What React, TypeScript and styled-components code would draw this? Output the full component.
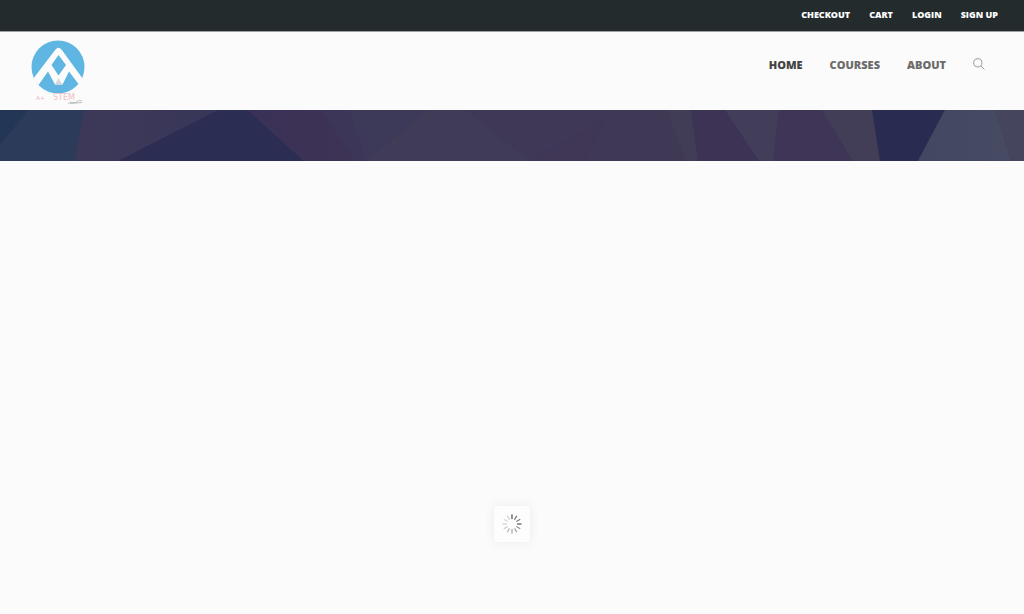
import React from 'react';
import styled, { createGlobalStyle } from 'styled-components';

const GlobalStyle = createGlobalStyle`
  *, *::before, *::after { box-sizing: border-box; }
  body {
    margin: 0;
    background: #fbfbfb;
    font-family: "Open Sans", "Liberation Sans", sans-serif;
  }
`;

const Page = styled.div`
  display: flex;
  flex-direction: column;
  min-height: 100vh;
`;

const TopBar = styled.nav`
  display: flex;
  justify-content: flex-end;
  align-items: center;
  gap: 19px;
  height: 31px;
  padding: 0 26px 1px;
  background: #232b2d;
`;

const TopLink = styled.a`
  color: #ffffff;
  font-size: 9px;
  font-weight: 800;
  line-height: 16px;
  text-decoration: none;
  text-transform: uppercase;
`;

const Header = styled.header`
  display: flex;
  justify-content: space-between;
  align-items: flex-start;
  height: 79px;
  padding: 4px 39px 0 28px;
  border-top: 1px solid #9da1a2;
`;

const LogoLink = styled.a`
  display: block;
  line-height: 0;
`;

const MainNav = styled.nav`
  display: flex;
  align-items: center;
  gap: 27px;
  padding-top: 21px;
`;

const NavLink = styled.a<{ $active?: boolean }>`
  color: ${(p) => (p.$active ? '#444444' : '#6c6c6c')};
  font-size: 11px;
  font-weight: 800;
  line-height: 16px;
  text-decoration: none;
  text-transform: uppercase;
`;

const SearchButton = styled.button`
  display: flex;
  padding: 0 0 2px;
  border: 0;
  background: none;
  color: #999999;
  cursor: pointer;
`;

const Banner = styled.section`
  height: 51px;
  background: #403a56;
  overflow: hidden;

  svg {
    display: block;
    width: 100%;
    height: 100%;
  }
`;

const Content = styled.main`
  display: flex;
  flex: 1;
  flex-direction: column;
  align-items: center;
  justify-content: flex-end;
  padding: 24px 24px 72px;
`;

const Loader = styled.div`
  display: flex;
  align-items: center;
  justify-content: center;
  width: 36px;
  height: 36px;
  border-radius: 2px;
  background: #fdfdfd;
  box-shadow: 0 0 12px rgba(0, 0, 0, 0.07);
`;

const topLinks = ['Checkout', 'Cart', 'Login', 'Sign up'];
const navLinks = ['Home', 'Courses', 'About'];
const spokes = [0.75, 0.6, 0.56, 0.62, 0.48, 0.4, 0.36, 0.3, 0.22, 0.16, 0.16, 0.2];

const Logo = () => (
  <svg width="60" height="70" viewBox="0 0 60 70" role="img" aria-label="A+ STEM">
    <circle cx="30" cy="31" r="26.5" fill="#5fb6e2" />
    <path
      d="M27.500 13.500Q30.500 10 33.500 13.500L55 43L50.500 48L41 35.500L34.500 48.500H27L20 35.500L10.500 49L5 43ZM30.500 19L23.500 29L30.500 39.500L38 29Z"
      fill="#fbfbfb"
      fillRule="evenodd"
    />
    <path d="M30.500 42L34.500 48.500H27Z" fill="#d3d9dc" />
    <text x="8" y="64" fontSize="6" fill="#eebfc4" fontFamily="DejaVu Sans, sans-serif">A+</text>
    <text x="25" y="64" fontSize="8" fill="#eebfc4" fontFamily="DejaVu Sans, sans-serif">STEM</text>
    <path d="M40 67.500q3 -2 5 -1t4 -1t5 -.5M42 67.500l12 -1" fill="none" stroke="#a9a9a9" strokeWidth=".7" />
  </svg>
);

const SearchIcon = () => (
  <svg width="12" height="12" viewBox="0 0 12 12" fill="none" stroke="currentColor" aria-hidden="true">
    <circle cx="4.800" cy="4.800" r="4.100" />
    <path d="M7.800 7.800L11.400 11.400" />
  </svg>
);

const BannerArt = () => (
  <svg viewBox="0 0 1024 51" preserveAspectRatio="none" aria-hidden="true">
    <defs>
      <linearGradient id="slate" x1="0" x2="1">
        <stop offset="0" stopColor="#3d3858" />
        <stop offset="1" stopColor="#383758" />
      </linearGradient>
      <linearGradient id="plum" x1="0" x2="1">
        <stop offset="0" stopColor="#3a3157" />
        <stop offset="1" stopColor="#3d3354" />
      </linearGradient>
      <linearGradient id="steel" x1="0" x2="1">
        <stop offset="0" stopColor="#434761" />
        <stop offset="1" stopColor="#464b63" />
      </linearGradient>
    </defs>
    <path d="M0 0H28L0 36Z" fill="#233655" />
    <path d="M28 0H84L75 51H0V36Z" fill="#2d3b5b" />
    <path d="M84 0H218L118 51H75Z" fill="url(#slate)" />
    <path d="M218 0H248L304 51H118Z" fill="#2c2d52" />
    <path d="M248 0H322L356 51H304Z" fill="url(#plum)" />
    <path d="M322 0H350L366 51H356Z" fill="#3c3758" />
    <path d="M350 0H428L366 51Z" fill="#3d3958" />
    <path d="M428 0H466L530 51H366Z" fill="#403b57" />
    <path d="M466 0H620L530 51Z" fill="#3f3857" />
    <path d="M620 0L530 51H586L610 0Z" fill="#403656" />
    <path d="M610 0H667L686 51H586Z" fill="#3f3955" />
    <path d="M667 0H691L698 51H686Z" fill="#413d57" />
    <path d="M691 0H725L759 51H698Z" fill="#3c3355" />
    <path d="M725 0H779L773 51H759Z" fill="#423d58" />
    <path d="M779 0H822L853 51H773Z" fill="#3e3557" />
    <path d="M822 0H872L880 51H853Z" fill="#423e58" />
    <path d="M872 0H945L918 51H880Z" fill="#292c50" />
    <path d="M945 0H995L1011 51H918Z" fill="url(#steel)" />
    <path d="M995 0H1024V51H1011Z" fill="#45465d" />
  </svg>
);

const Spinner = () => (
  <svg width="20" height="20" viewBox="0 0 20 20" aria-hidden="true">
    {spokes.map((opacity, i) => (
      <path
        key={i}
        d="M10 1V4.500"
        stroke="#222222"
        strokeWidth="1.3"
        strokeLinecap="round"
        opacity={opacity}
        transform={`rotate(${i * 30} 10 10)`}
      />
    ))}
  </svg>
);

export default function App() {
  return (
    <>
      <GlobalStyle />
      <Page>
        <TopBar aria-label="Account">
          {topLinks.map((label) => (
            <TopLink key={label} href="#">{label}</TopLink>
          ))}
        </TopBar>
        <Header>
          <LogoLink href="#"><Logo /></LogoLink>
          <MainNav aria-label="Main">
            {navLinks.map((label) => (
              <NavLink key={label} href="#" $active={label === 'Home'}>{label}</NavLink>
            ))}
            <SearchButton type="button" aria-label="Search"><SearchIcon /></SearchButton>
          </MainNav>
        </Header>
        <Banner><BannerArt /></Banner>
        <Content>
          <Loader role="status" aria-label="Loading"><Spinner /></Loader>
        </Content>
      </Page>
    </>
  );
}
